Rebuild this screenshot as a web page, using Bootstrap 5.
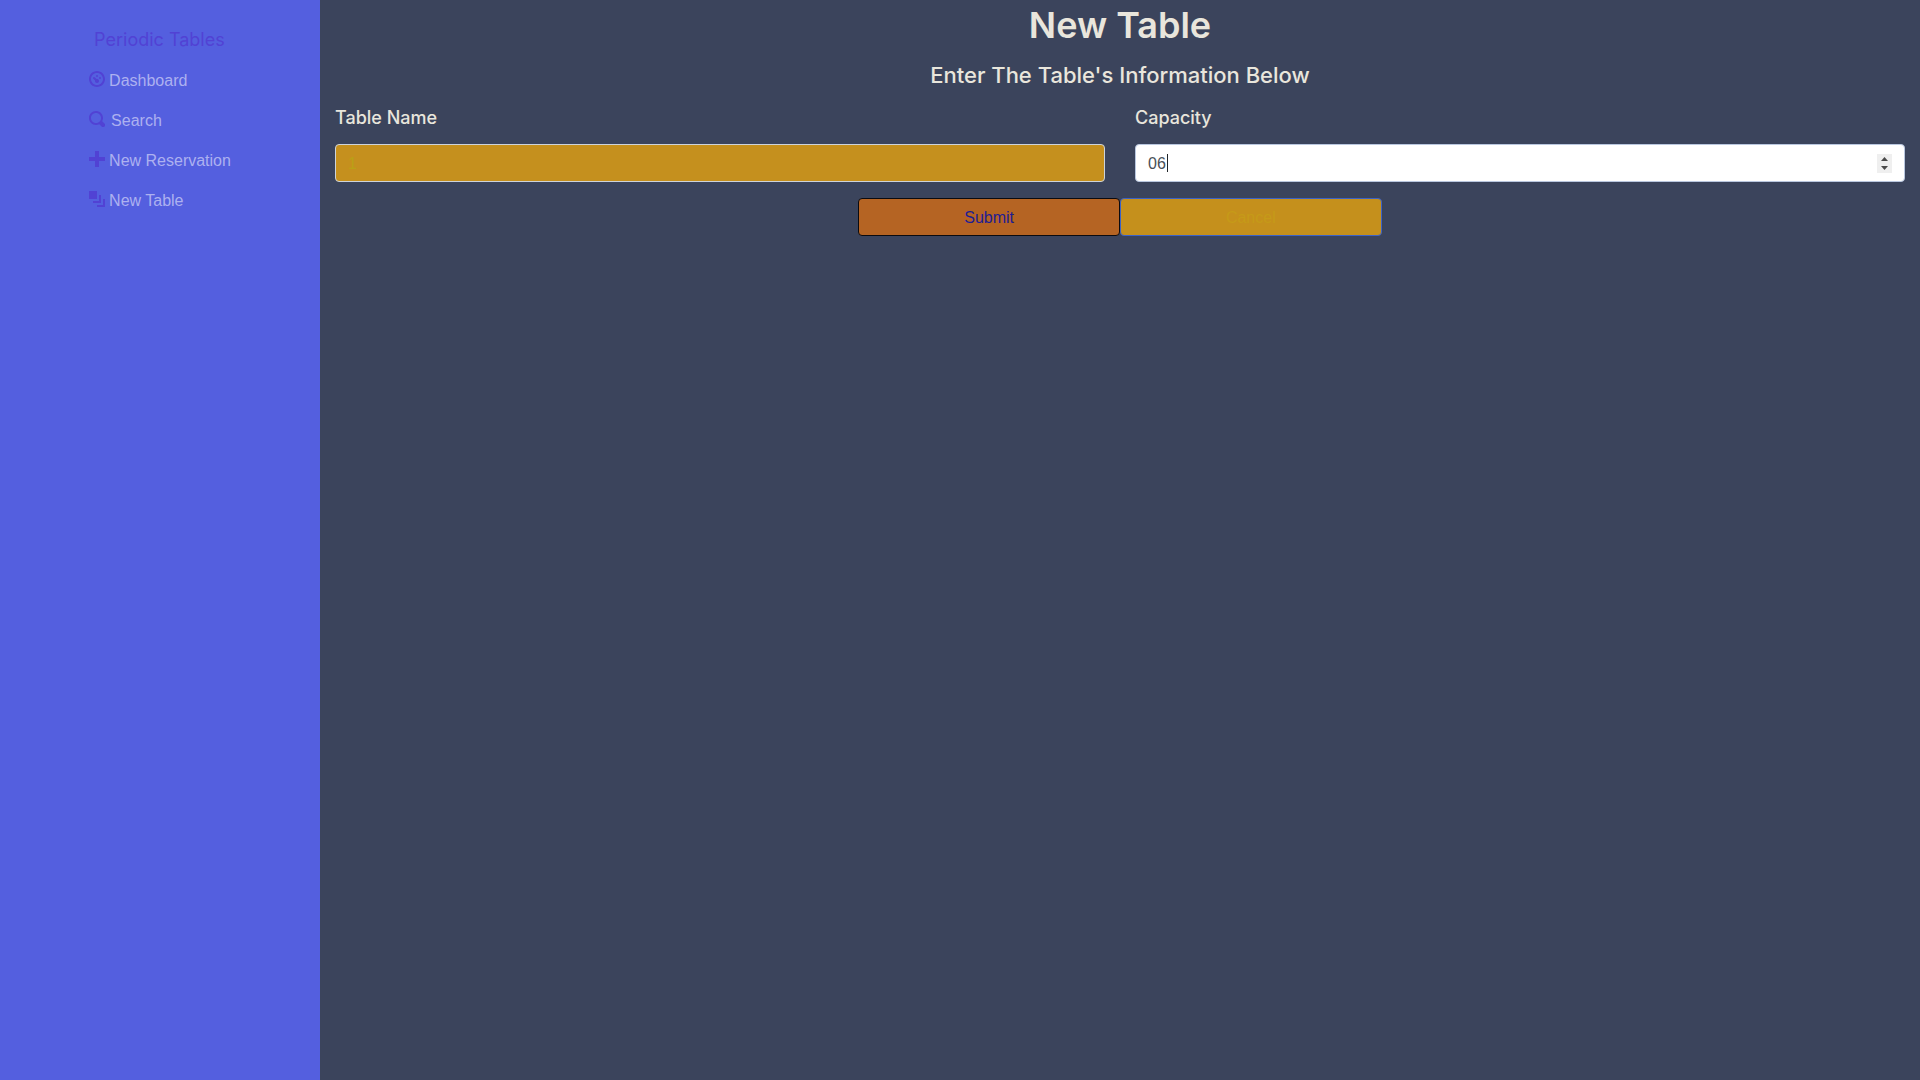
<!DOCTYPE html>
<html lang="en">
<head>
<meta charset="utf-8">
<meta name="viewport" content="width=device-width, initial-scale=1">
<title>Periodic Tables</title>
<link href="https://cdn.jsdelivr.net/npm/bootstrap@5.3.0/dist/css/bootstrap.min.css" rel="stylesheet">
<style>
body { font-family: "Liberation Sans", sans-serif; font-size: 16px; line-height: 24px; background: #3b445c; color: #e9e6dc; }
.side-menu { background: #545fdf; }
.brand { color: #5142d4; font-size: 18px; line-height: 24px; padding: 0 5px; }
.brand:hover { color: #5142d4; }
.menu-list { gap: 15px; }
.menu-link { color: #adb1f0; padding: 1px 0 0; }
.menu-link:hover { color: #fff; }
.menu-link svg { width: 16px; height: 16px; margin-bottom: 4px; fill: #5142d4; }
.menu-link.wide-gap { column-gap: 6px; }
.brand, .page-title, .sub-title, .field-label { font-family: Inter, "Liberation Sans", sans-serif; }
.page-title, .sub-title, .field-label { font-weight: 500; }
.page-title { font-size: 36px; line-height: 50px; font-weight: 600; }
.sub-title { font-size: 22px; line-height: 34px; }
.field-label { font-size: 18px; line-height: 28px; }
.gutter { --bs-gutter-x: 30px; }
.side-pad { padding: 0 15px; }
.form-control, .btn { font-size: 16px; line-height: 24px; padding: 7px 12px 5px; border-radius: 4px; }
.form-control { border-color: #ced4da; }
.name-input, .name-input:focus { background: #c5901e; color: #bba016; }
.count-input, .count-input:focus { background: #fff; color: #495057; border-color: #b9c7df; }
.count-input::-webkit-inner-spin-button { opacity: 0; }
.caret-mark { left: 32px; top: 10px; width: 1px; height: 18px; background: #212529; }
.step-mark { right: 13px; top: 10px; pointer-events: none; }
.btn-send, .btn-send:hover { background: #b56423; border-color: #0b0b10; color: #1d1d94; }
.btn-drop, .btn-drop:hover { background: #c5901c; border-color: #3c62c6; color: #c69a18; }
</style>
<script src="https://cdn.jsdelivr.net/npm/bootstrap@5.3.0/dist/js/bootstrap.bundle.min.js"></script>
</head>
<body>
<div class="container-fluid p-0">
  <div class="row g-0 min-vh-100">
    <nav class="col-2 side-menu d-flex flex-column align-items-center pt-4">
      <div class="d-flex flex-column align-items-start pt-1">
        <a class="brand text-decoration-none" href="#">Periodic Tables</a>
        <ul class="nav menu-list flex-column pt-3">
          <li><a class="nav-link menu-link d-flex align-items-center gap-1" href="#"><svg viewBox="0 0 8 8" aria-hidden="true"><path d="M4 0c-2.200 0-4 1.800-4 4s1.800 4 4 4 4-1.800 4-4-1.800-4-4-4zm0 1c1.660 0 3 1.340 3 3s-1.340 3-3 3-3-1.340-3-3 1.340-3 3-3z"/><circle cx="4" cy="2.500" r=".5"/><circle cx="5.500" cy="3.500" r=".5"/><circle cx="4" cy="5" r="1"/><path d="M2.500 3.500L4 5" stroke="#5142d4" stroke-linecap="round"/></svg><span>Dashboard</span></a></li>
          <li><a class="nav-link menu-link wide-gap d-flex align-items-center" href="#"><svg viewBox="0 0 8 8" aria-hidden="true"><path d="M3.5 0c-1.93 0-3.5 1.57-3.5 3.5s1.57 3.5 3.5 3.5c.59 0 1.17-.14 1.66-.41a1 1 0 0 0 .13.13l1 1a1.02 1.02 0 1 0 1.44-1.44l-1-1a1 1 0 0 0-.16-.13c.27-.49.44-1.06.44-1.66 0-1.93-1.55-3.5-3.5-3.5zm0 1c1.39 0 2.5 1.11 2.5 2.5 0 .66-.24 1.27-.66 1.72-.01.01-.02.02-.03.03a1 1 0 0 0-.13.13c-.44.4-1.04.63-1.69.63-1.39 0-2.5-1.11-2.5-2.5s1.11-2.5 2.5-2.5z"/></svg><span>Search</span></a></li>
          <li><a class="nav-link menu-link d-flex align-items-center gap-1" href="#"><svg viewBox="0 0 8 8" aria-hidden="true"><path d="M3 0v3h-3v2h3v3h2v-3h3v-2h-3v-3h-2z"/></svg><span>New Reservation</span></a></li>
          <li><a class="nav-link menu-link d-flex align-items-center gap-1" href="#"><svg viewBox="0 0 8 8" aria-hidden="true"><path d="M0 0v4h4v-4h-4zm5 2v3h-3v1h4v-4h-1zm2 2v3h-3v1h4v-4h-1z"/></svg><span>New Table</span></a></li>
        </ul>
      </div>
    </nav>
    <main class="col-10 side-pad">
      <h1 class="page-title text-center mb-2">New Table</h1>
      <h2 class="sub-title text-center mb-2">Enter The Table's Information Below</h2>
      <form>
        <div class="row gutter mb-3">
          <div class="col-6">
            <label class="field-label mb-2 pt-1 pb-1 d-block" for="table-name">Table Name</label>
            <input class="form-control name-input" id="table-name" type="text" value="1">
          </div>
          <div class="col-6">
            <label class="field-label mb-2 pt-1 pb-1 d-block" for="capacity">Capacity</label>
            <div class="position-relative">
              <input class="form-control count-input" id="capacity" type="number" value="06">
              <span class="caret-mark position-absolute"></span>
              <svg class="step-mark position-absolute" width="15" height="19" viewBox="0 0 15 19" aria-hidden="true"><rect width="15" height="19" fill="#efefef"/><path d="M4 7L7.500 3L11 7zM4 12h7L7.500 16z" fill="#4a4a4a"/></svg>
            </div>
          </div>
        </div>
        <div class="row g-0 justify-content-center">
          <button class="btn btn-send col-2" type="submit">Submit</button>
          <button class="btn btn-drop col-2" type="button">Cancel</button>
        </div>
      </form>
    </main>
  </div>
</div>
</body>
</html>
